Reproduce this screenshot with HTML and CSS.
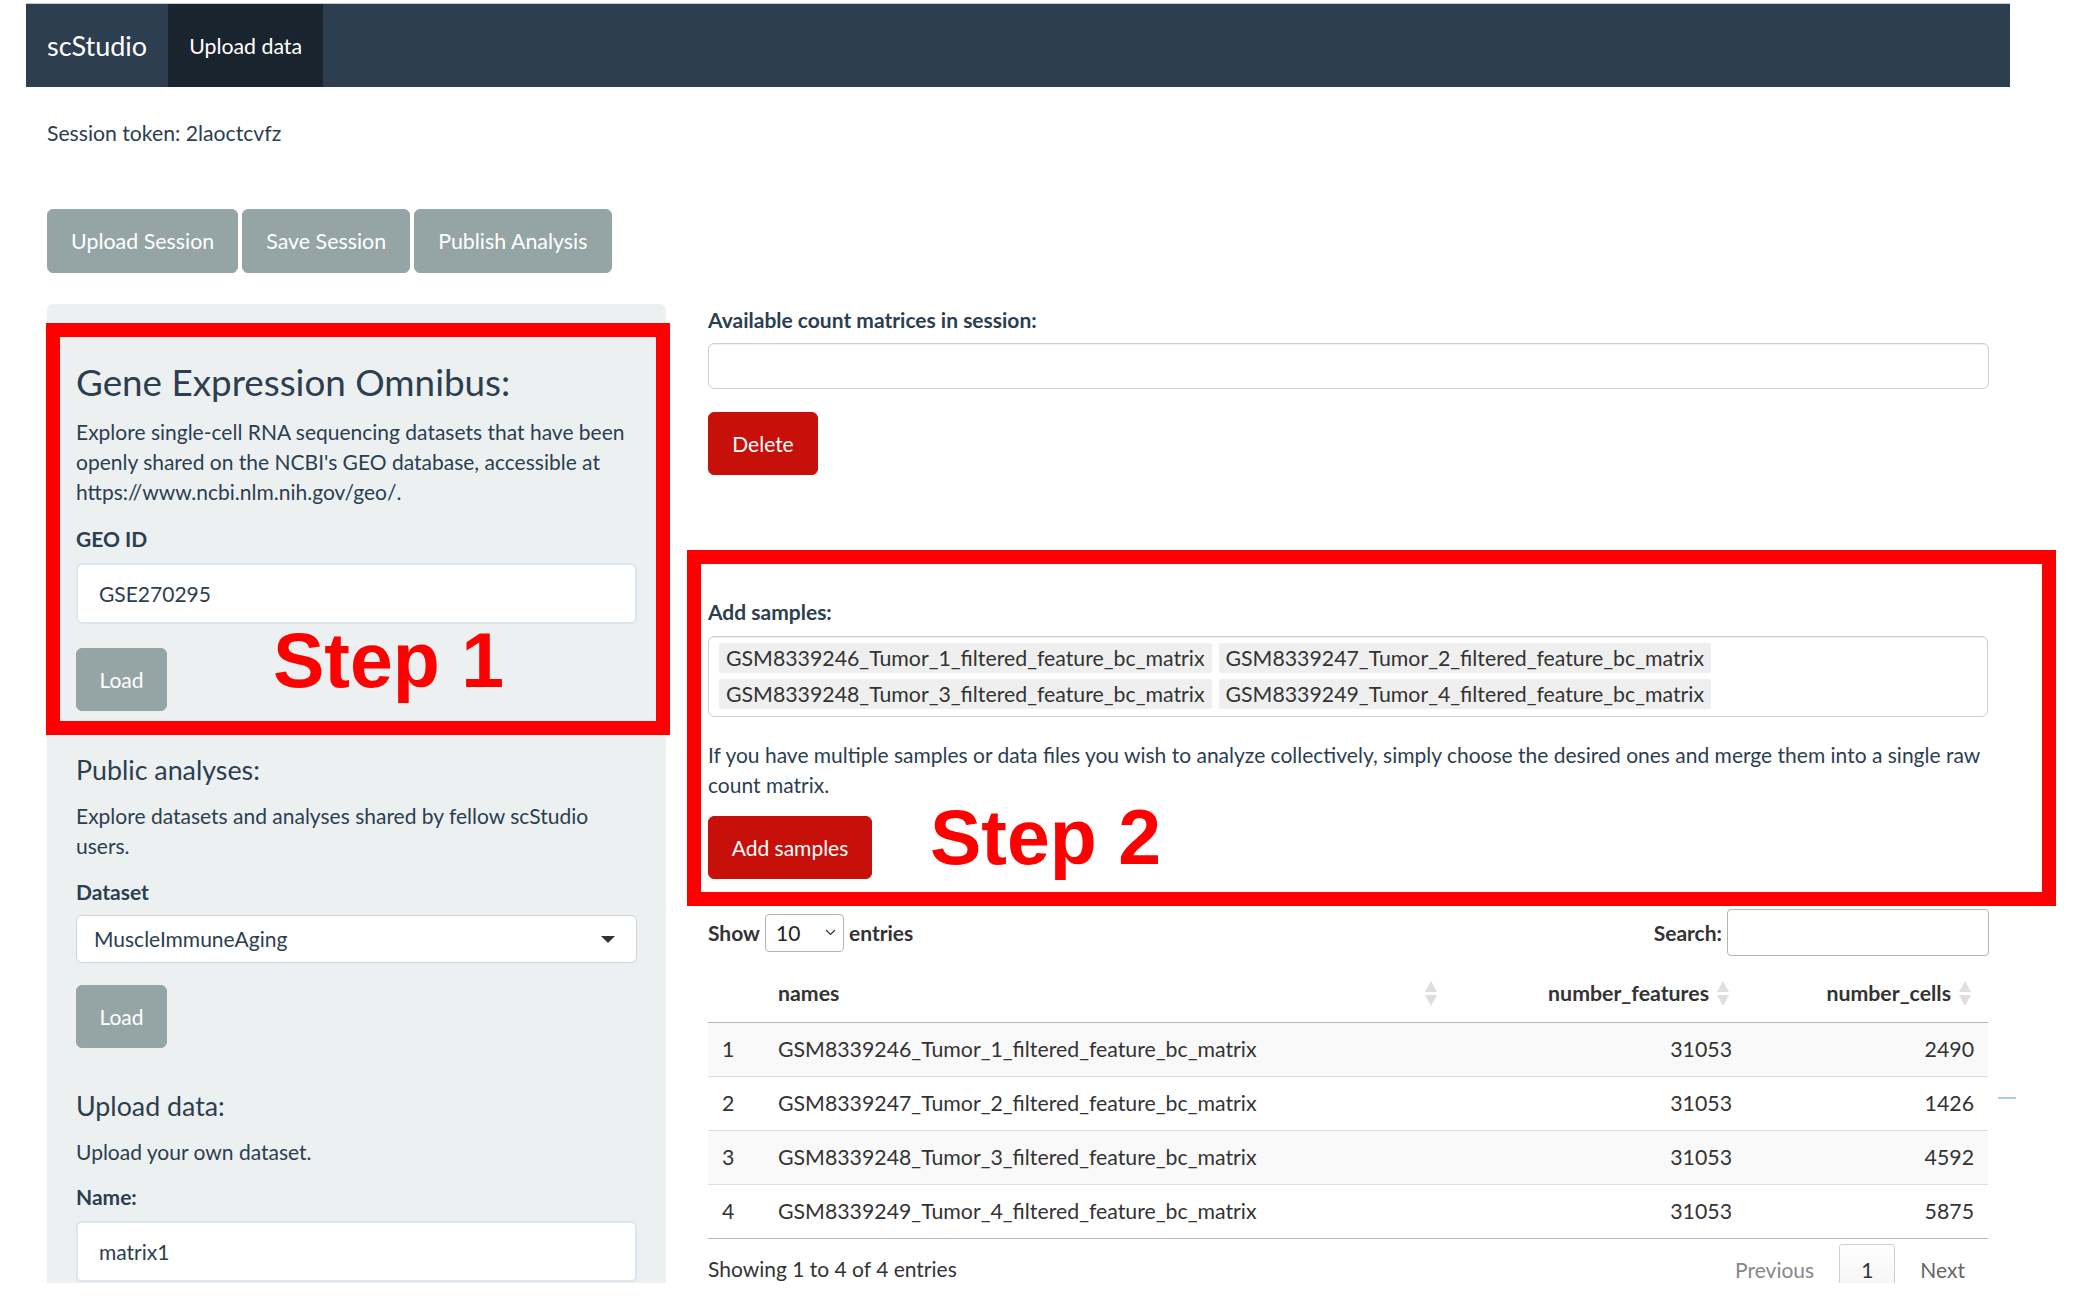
FILE: index.html
```html
<!DOCTYPE html>
<html lang="en">
<head>
<meta charset="utf-8">
<title>scStudio</title>
<link rel="stylesheet" href="styles.css">
</head>
<body>
<div class="stage">
  <div class="page">
    <nav class="navbar">
      <span class="brand">scStudio</span>
      <span class="nav-item active">Upload data</span>
    </nav>
    <div class="content">
      <div class="token">Session token: 2laoctcvfz</div>
      <div class="session-btns">
        <button class="btn top-btn">Upload Session</button>
        <button class="btn top-btn">Save Session</button>
        <button class="btn top-btn">Publish Analysis</button>
      </div>
      <div class="row">
        <aside class="well">
          <h3 class="h3 geo-title">Gene Expression Omnibus:</h3>
          <p class="para p-geo">Explore single-cell RNA sequencing datasets that have been openly shared on the NCBI's GEO database, accessible at https://www.ncbi.nlm.nih.gov/geo/.</p>
          <label class="lbl l-geo">GEO ID</label>
          <div class="text-input i-geo">GSE270295</div>
          <button class="btn load l1">Load</button>

          <h4 class="h4 h-public">Public analyses:</h4>
          <p class="para p-public">Explore datasets and analyses shared by fellow scStudio users.</p>
          <label class="lbl l-dataset">Dataset</label>
          <div class="select-single"><span>MuscleImmuneAging</span><span class="caret"></span></div>
          <button class="btn load l2">Load</button>

          <h4 class="h4 h-upload">Upload data:</h4>
          <p class="para p-upload">Upload your own dataset.</p>
          <label class="lbl l-name">Name:</label>
          <div class="text-input i-name">matrix1</div>
        </aside>

        <main class="main">
          <label class="lbl l-avail">Available count matrices in session:</label>
          <div class="selectize empty"></div>
          <button class="btn btn-red del">Delete</button>

          <label class="lbl l-add">Add samples:</label>
          <div class="selectize multi">
            <span class="chip">GSM8339246_Tumor_1_filtered_feature_bc_matrix</span>
            <span class="chip">GSM8339247_Tumor_2_filtered_feature_bc_matrix</span>
            <span class="chip">GSM8339248_Tumor_3_filtered_feature_bc_matrix</span>
            <span class="chip">GSM8339249_Tumor_4_filtered_feature_bc_matrix</span>
          </div>
          <p class="para p-merge">If you have multiple samples or data files you wish to analyze collectively, simply choose the desired ones and merge them into a single raw count matrix.</p>
          <button class="btn btn-red add">Add samples</button>

          <div class="dt-controls">
            <div class="dt-length">
              <span>Show</span>
              <span class="len-select">10<svg class="chev" width="11" height="7" viewBox="0 0 11 7"><polyline points="1,1 5.5,5.5 10,1" fill="none" stroke="#333" stroke-width="1.2"/></svg></span>
              <span>entries</span>
            </div>
            <div class="dt-search">
              <span>Search:</span>
              <span class="search-box"></span>
            </div>
          </div>

          <table class="dt">
            <colgroup>
              <col class="c-idx"><col class="c-name"><col class="c-feat"><col class="c-cells">
            </colgroup>
            <thead>
              <tr>
                <th></th>
                <th class="sort">names<span class="arrows"></span></th>
                <th class="sort num">number_features<span class="arrows"></span></th>
                <th class="sort num">number_cells<span class="arrows"></span></th>
              </tr>
            </thead>
            <tbody>
              <tr class="odd"><td>1</td><td>GSM8339246_Tumor_1_filtered_feature_bc_matrix</td><td class="num">31053</td><td class="num">2490</td></tr>
              <tr><td>2</td><td>GSM8339247_Tumor_2_filtered_feature_bc_matrix</td><td class="num">31053</td><td class="num">1426</td></tr>
              <tr class="odd"><td>3</td><td>GSM8339248_Tumor_3_filtered_feature_bc_matrix</td><td class="num">31053</td><td class="num">4592</td></tr>
              <tr><td>4</td><td>GSM8339249_Tumor_4_filtered_feature_bc_matrix</td><td class="num">31053</td><td class="num">5875</td></tr>
            </tbody>
          </table>

          <div class="dt-footer">
            <div class="dt-info">Showing 1 to 4 of 4 entries</div>
            <div class="dt-paging">
              <span class="pg prev">Previous</span>
              <span class="pg current">1</span>
              <span class="pg next">Next</span>
            </div>
          </div>
        </main>
      </div>
    </div>
  </div>

  <div class="annot box1"></div>
  <div class="annot box2"></div>
  <div class="step step1">Step 1</div>
  <div class="step step2">Step 2</div>
  <div class="blue-dash"></div>
</div>
</body>
</html>
```

FILE: styles.css
```css
* { box-sizing: border-box; }

html, body {
  margin: 0;
  padding: 0;
  background: #ffffff;
}

body {
  font-family: Lato, "Helvetica Neue", Arial, sans-serif;
  font-size: 21px;
  line-height: 30px;
  color: #2c3e50;
}

.stage {
  position: relative;
  width: 2090px;
  height: 1306px;
  overflow: hidden;
}

.page {
  margin: 3px 0 0 26px;
  width: 1984px;
  height: 1280px;
  overflow: hidden;
}

/* navbar */
.navbar {
  display: flex;
  height: 84px;
  background: #2c3e50;
  border-top: 1px solid #c5cbd1;
}
.brand {
  display: flex;
  align-items: center;
  padding: 0 21px;
  font-size: 27px;
  color: #ffffff;
}
.nav-item {
  display: flex;
  align-items: center;
  padding: 0 21px;
  font-size: 21.3px;
  color: #ffffff;
}
.nav-item.active { background: #1a242f; }

.content { padding: 0 21px; }

.token { margin-top: 31px; font-size: 21.2px; }

.session-btns {
  display: flex;
  gap: 4px;
  margin-top: 61px;
}

.btn {
  font: inherit;
  line-height: 30px;
  height: 64px;
  padding: 0 21px;
  border: 1px solid #95a5a6;
  background: #95a5a6;
  color: #ffffff;
  border-radius: 6px;
  cursor: pointer;
}
.top-btn {
  padding: 0 23px;
  font-size: 21.4px;
}

.row {
  display: grid;
  grid-template-columns: 619px 1281px;
  column-gap: 42px;
  margin-top: 31px;
  align-items: start;
}

/* left well */
.well {
  display: flex;
  flex-direction: column;
  background: #ecf0f1;
  border-radius: 6px;
  padding: 0 29px;
  height: 1100px;
}
.well .btn, .main .btn { align-self: flex-start; }

.h3 {
  margin: 0;
  font-size: 36.8px;
  line-height: 40px;
  font-weight: 400;
}
.h4 {
  margin: 0;
  font-size: 26.8px;
  line-height: 29px;
  font-weight: 400;
}
.para { margin: 0; }
.lbl {
  display: block;
  font-weight: 700;
}

.geo-title { margin-top: 58px; }
.p-geo { margin-top: 15px; }
.l-geo { margin-top: 17px; }
.i-geo { margin-top: 9px; }
.l1 { margin-top: 24px; width: 91px; height: 63px; }

.h-public { margin-top: 45px; }
.p-public { margin-top: 16px; }
.l-dataset { margin-top: 16px; }
.select-single { margin-top: 8px; }
.l2 { margin-top: 22px; width: 91px; height: 63px; }

.h-upload { margin-top: 44px; }
.p-upload { margin-top: 16px; }
.l-name { margin-top: 15px; }
.i-name { margin-top: 9px; }

.text-input {
  height: 61px;
  border: 2px solid #dce4ec;
  border-radius: 6px;
  background: #ffffff;
  padding: 0 21px;
  display: flex;
  align-items: center;
  flex-shrink: 0;
}

.select-single {
  height: 48px;
  border: 1px solid #cfd3d6;
  border-radius: 6px;
  background: #ffffff;
  padding: 0 17px;
  display: flex;
  align-items: center;
  justify-content: space-between;
  color: #2c3e50;
}
.caret {
  width: 0;
  height: 0;
  border-left: 7px solid transparent;
  border-right: 7px solid transparent;
  border-top: 7px solid #333333;
  margin-right: 4px;
}

/* main column */
.main {
  display: flex;
  flex-direction: column;
}
.l-avail { margin-top: 1px; }

.selectize {
  border: 1px solid #cfcfcf;
  border-radius: 6px;
  background: #ffffff;
  box-shadow: inset 0 1px 1px rgba(0, 0, 0, 0.06);
}
.selectize.empty {
  margin-top: 8px;
  height: 46px;
}
.del { margin-top: 23px; width: 110px; height: 63px; }

.btn-red {
  background: #c8100b;
  border-color: #c8100b;
}

.l-add { margin-top: 122px; }
.selectize.multi {
  margin-top: 9px;
  padding: 6px 10px 7px;
  display: flex;
  flex-wrap: wrap;
  gap: 6px 7px;
  width: 1280px;
}
.chip {
  background: #efefef;
  color: #333333;
  padding: 0 7px;
  font-size: 21.3px;
  line-height: 30px;
  border-radius: 2px;
}
.p-merge { margin-top: 23px; }
.add { margin-top: 16px; width: 164px; height: 63px; }

/* datatable */
.dt-controls {
  margin-top: 30px;
  height: 47px;
  display: flex;
  justify-content: space-between;
  align-items: center;
  color: #333333;
  font-weight: 700;
}
.dt-length, .dt-search {
  display: flex;
  align-items: center;
}
.len-select {
  width: 79px;
  height: 38px;
  margin: 0 5px 0 5px;
  border: 1px solid #b4b4b4;
  border-radius: 4px;
  padding: 0 0 0 10px;
  display: flex;
  align-items: center;
  justify-content: space-between;
  font-weight: 400;
  color: #222222;
}
.chev { margin-right: 7px; }
.search-box {
  width: 262px;
  height: 47px;
  margin-left: 5px;
  border: 1px solid #b4b4b4;
  border-radius: 4px;
  background: #ffffff;
}

.dt {
  margin-top: 8px;
  width: 1280px;
  table-layout: fixed;
  border-collapse: separate;
  border-spacing: 0;
  color: #333333;
  font-size: 21.3px;
}
.c-idx { width: 56px; }
.c-name { width: 690px; }
.c-feat { width: 292px; }
.c-cells { width: 242px; }

.dt th {
  position: relative;
  padding: 14px 14px;
  line-height: 30px;
  font-weight: 700;
  text-align: left;
  border-bottom: 1px solid #b8b8b8;
}
.dt th.sort { padding-right: 37px; }
.dt th.num, .dt td.num { text-align: right; }

.arrows {
  position: absolute;
  right: 17px;
  top: 50%;
  width: 12px;
  height: 25px;
  margin-top: -12px;
}
.arrows::before, .arrows::after {
  content: "";
  position: absolute;
  left: 0;
  width: 0;
  height: 0;
  border-left: 6px solid transparent;
  border-right: 6px solid transparent;
}
.arrows::before {
  top: 0;
  border-bottom: 11px solid #dedede;
}
.arrows::after {
  bottom: 0;
  border-top: 11px solid #dedede;
}

.dt td {
  padding: 11px 14px 12px;
  line-height: 30px;
  border-top: 1px solid #dddddd;
  white-space: nowrap;
}
.dt tbody tr:first-child td { border-top: 0; }
.dt tbody tr.odd td { background: #f9f9f9; }
.dt tbody tr:last-child td { border-bottom: 1px solid #b8b8b8; }

.dt-footer {
  margin-top: 5px;
  display: flex;
  justify-content: space-between;
  align-items: flex-start;
  color: #333333;
}
.dt-info { padding-top: 10px; }
.dt-paging { display: flex; margin-right: 2px; }
.pg {
  padding: 10px 21px 11px;
  margin-left: 3px;
  border: 1px solid transparent;
  line-height: 30px;
}
.pg.prev { color: #888888; }
.pg.next { color: #666666; }
.pg.current {
  border: 1px solid #d0d0d0;
  border-radius: 3px;
  background: linear-gradient(#ffffff, #f3f3f3);
  color: #333333;
}

/* annotations laid over the screenshot */
.annot {
  position: absolute;
  border: 14px solid #fe0000;
}
.box1 { left: 46px; top: 323px; width: 624px; height: 412px; }
.box2 { left: 687px; top: 550px; width: 1369px; height: 356px; }

.step {
  position: absolute;
  font-family: "Liberation Sans", Arial, sans-serif;
  font-weight: 700;
  font-size: 77px;
  line-height: 77px;
  color: #fe0000;
  white-space: nowrap;
}
.step1 { left: 273px; top: 622px; }
.step2 { left: 930px; top: 799px; }

.blue-dash {
  position: absolute;
  left: 1998px;
  top: 1097px;
  width: 18px;
  height: 2px;
  background: #adc8ee;
}
```
